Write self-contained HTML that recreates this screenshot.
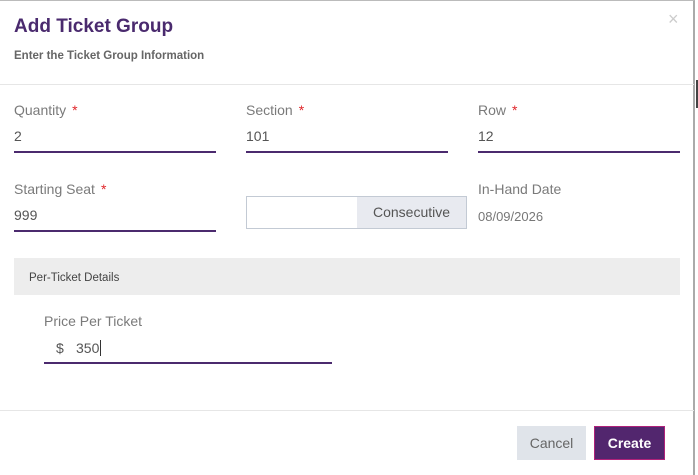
<!DOCTYPE html>
<html><head><style>
body{margin:0;width:698px;height:475px;background:#fff;font-family:"Liberation Sans",sans-serif;position:relative;overflow:hidden}
.a{position:absolute}
.lbl{font-size:14px;color:#7a7a7a}
.lbl b{color:#e0262a;font-weight:normal;margin-left:6px}
.val{font-size:14px;color:#555}
.ul{height:2px;background:#4b2a6e}
</style></head><body>
<div class="a" style="left:0;top:0;width:695px;height:475px;border-top:1px solid #bbb;border-right:2px solid #aaa;box-sizing:border-box"></div>
<div class="a" style="left:696px;top:80px;width:2px;height:28px;background:#444"></div>
<div class="a" style="left:14px;top:16px;font-size:19px;font-weight:bold;color:#4a2a6e">Add Ticket Group</div>
<div class="a" style="left:14px;top:50px;font-size:11.5px;font-weight:bold;color:#666">Enter the Ticket Group Information</div>
<div class="a" style="left:668px;top:9px;font-size:18px;color:#ccc">×</div>
<div class="a" style="left:0;top:84px;width:694px;height:1px;background:#e6e6e6"></div>

<div class="a lbl" style="left:14px;top:102px">Quantity<b>*</b></div>
<div class="a val" style="left:14px;top:128px">2</div>
<div class="a ul" style="left:14px;top:151px;width:202px"></div>
<div class="a lbl" style="left:246px;top:102px">Section<b>*</b></div>
<div class="a val" style="left:246px;top:128px">101</div>
<div class="a ul" style="left:246px;top:151px;width:202px"></div>
<div class="a lbl" style="left:478px;top:102px">Row<b>*</b></div>
<div class="a val" style="left:478px;top:128px">12</div>
<div class="a ul" style="left:478px;top:151px;width:202px"></div>

<div class="a lbl" style="left:14px;top:181px">Starting Seat<b>*</b></div>
<div class="a val" style="left:14px;top:207px">999</div>
<div class="a ul" style="left:14px;top:230px;width:202px"></div>
<div class="a" style="left:246px;top:196px;width:221px;height:33px;border:1px solid #c3cad4;box-sizing:border-box;background:#fff">
<div class="a" style="left:110px;top:0;width:109px;height:31px;background:#e8eaf0;font-size:14px;color:#555;line-height:31px;text-align:center">Consecutive</div></div>
<div class="a lbl" style="left:478px;top:181px">In-Hand Date</div>
<div class="a" style="left:478px;top:209px;font-size:13px;color:#777">08/09/2026</div>

<div class="a" style="left:14px;top:258px;width:666px;height:37px;background:#ededed"></div>
<div class="a" style="left:29px;top:272px;font-size:11.5px;color:#444">Per-Ticket Details</div>
<div class="a lbl" style="left:44px;top:313px">Price Per Ticket</div>
<div class="a val" style="left:56px;top:340px">$</div>
<div class="a val" style="left:76px;top:340px">350<span style="border-left:1px solid #333;margin-left:1px"></span></div>
<div class="a" style="left:44px;top:362px;width:288px;height:2px;background:#4b2a6e"></div>

<div class="a" style="left:0;top:410px;width:694px;height:1px;background:#e6e6e6"></div>
<div class="a" style="left:517px;top:426px;width:69px;height:34px;background:#e0e4ea;color:#666;font-size:14px;line-height:34px;text-align:center">Cancel</div>
<div class="a" style="left:594px;top:426px;width:71px;height:34px;background:#52266e;border:1px solid #b0217a;box-sizing:border-box;color:#fff;font-size:14px;font-weight:bold;line-height:32px;text-align:center">Create</div>
</body></html>
